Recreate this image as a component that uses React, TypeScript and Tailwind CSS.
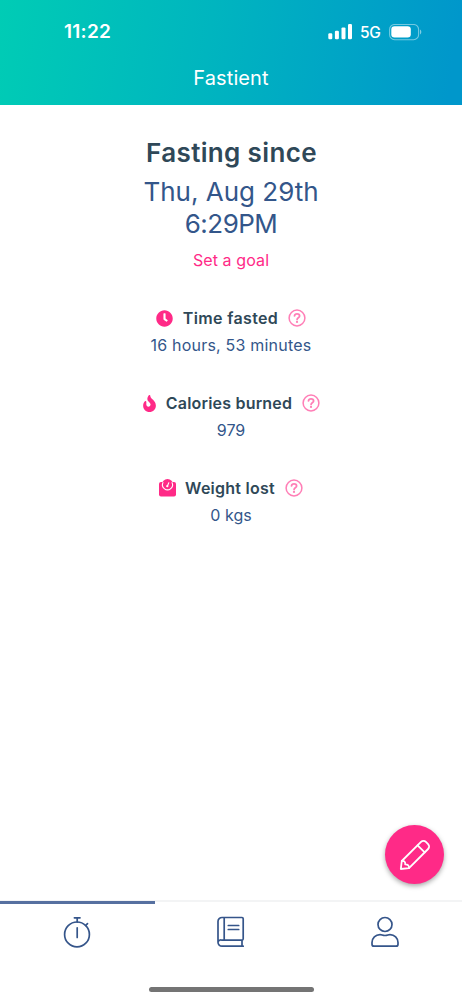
import type { ReactNode } from "react";
import { FaClock, FaFire } from "react-icons/fa";

function StatusBar() {
  return (
    <div className="flex h-[64px] items-center pl-[64px] pr-[40px] text-white">
      <span className="text-[19px] font-semibold leading-6 tracking-[0.25px]">11:22</span>
      <svg className="ml-auto" width="25" height="16" viewBox="0 0 25 16" fill="white">
        <rect x="0.3" y="9.2" width="4" height="6" rx="1.2" />
        <rect x="6.9" y="6.7" width="4" height="8.5" rx="1.2" />
        <rect x="13.5" y="3.4" width="4" height="11.8" rx="1.2" />
        <rect x="20" y="0.1" width="4" height="15.1" rx="1.2" />
      </svg>
      <span className="ml-[7px] mt-[2px] w-[21px] text-[15.5px] font-medium leading-5 tracking-[-0.4px]">5G</span>
      <svg className="ml-[8px]" width="33" height="17" viewBox="0 0 33 17" fill="none">
        <rect x="0.6" y="0.5" width="29" height="15.2" rx="5" stroke="white" strokeOpacity="0.45" strokeWidth="1.1" />
        <rect x="2.3" y="2.3" width="19.5" height="11.2" rx="3.2" fill="white" />
        <path d="M31 5.6v5c1.8-.8 1.8-4.2 0-5Z" fill="white" fillOpacity="0.5" />
      </svg>
    </div>
  );
}

function HelpIcon() {
  return (
    <svg
      className="ml-[10px] size-[18px] text-[#ff2a87] opacity-60"
      viewBox="0 0 18 18"
      fill="none"
      stroke="currentColor"
      strokeWidth="1.5"
      strokeLinecap="round"
    >
      <circle cx="9" cy="9" r="7.9" />
      <path d="M6.5 6.9c.2-1.3 1.2-2 2.5-2 1.5 0 2.6.9 2.6 2.1 0 1.7-2.5 1.8-2.5 3.4" strokeWidth="1.8" />
      <circle cx="9" cy="12.9" r="1.1" fill="currentColor" stroke="none" />
    </svg>
  );
}

function ScaleIcon() {
  return (
    <svg className="mr-[9px] h-[18px] w-[17px] text-[#ff2a87]" viewBox="0 0 17 18" fill="none">
      <path d="M2 3h13a2 2 0 0 1 2 2v10.600a2 2 0 0 1-2 2H2a2 2 0 0 1-2-2V5a2 2 0 0 1 2-2Z" fill="currentColor" />
      <circle cx="8.500" cy="5.800" r="5.700" fill="currentColor" />
      <path d="M4.200 3.200a5 5 0 1 0 8.600 0" stroke="white" strokeWidth="1.100" />
      <path d="M8.300 7.200l1.500-3.500" stroke="white" strokeWidth="1.100" strokeLinecap="round" />
      <circle cx="8.300" cy="7.200" r="1.100" fill="white" />
    </svg>
  );
}

type StatProps = { icon: ReactNode; label: ReactNode; value: ReactNode };

function Stat({ icon, label, value }: StatProps) {
  return (
    <section className="flex h-[85px] flex-col items-center">
      <h2 className="flex h-[28px] items-center text-[#2f4858]">
        {icon}
        {label}
        <HelpIcon />
      </h2>
      {value}
    </section>
  );
}

export default function App() {
  return (
    <div className="flex h-[1000px] w-[462px] flex-col bg-white font-['Inter',sans-serif]">
      <header className="h-[105px] bg-linear-[98deg,#00ccb5_0%,#00b5bf_45%,#0097cb_97%]">
        <StatusBar />
        <h1 className="text-center text-[20px] leading-[28px] text-white">
          <span className="tracking-[0.1px]">Fastient</span>
        </h1>
      </header>

      <main className="relative flex flex-1 flex-col items-center pt-[30px]">
        <h2 className="pl-px text-[26px] font-semibold leading-[35px] tracking-[0.35px] text-[#2f4858]">Fasting since</h2>
        <div className="mt-[6px] flex flex-col items-center text-[26px] leading-[32px] text-[#33568a]">
          <span>Thu, Aug 29th</span>
          <span className="tracking-[-0.5px]">6:29PM</span>
        </div>
        <a className="mt-[8px] text-[16px] leading-[24px] tracking-[0.1px] text-[#ff2a87]">Set a goal</a>

        <div className="mt-[32px]">
          <Stat
            icon={<FaClock className="mr-[10px] size-[17px] text-[#ff2a87]" />}
            label={<span className="text-[16px] font-semibold tracking-[0.35px]">Time fasted</span>}
            value={<p className="text-[16px] leading-[27px] tracking-[0.2px] text-[#33568a]">16 hours, 53 minutes</p>}
          />
          <Stat
            icon={<FaFire className="mr-[9px] h-[17px] w-[15px] text-[#ff2a87]" />}
            label={<span className="text-[16px] font-semibold tracking-[0.2px]">Calories burned</span>}
            value={<p className="text-[16px] leading-[27px] text-[#33568a]">979</p>}
          />
          <Stat
            icon={<ScaleIcon />}
            label={<span className="text-[16px] font-semibold tracking-[0.25px]">Weight lost</span>}
            value={<p className="text-[16px] leading-[27px] text-[#33568a]">0 kgs</p>}
          />
        </div>

        <button
          aria-label="Edit"
          className="absolute bottom-[16px] right-[18px] flex size-[59px] items-center justify-center rounded-full bg-[#ff2a87] shadow-[0_2px_5px_rgba(0,0,0,0.35)]"
        >
          <svg width="32" height="32" viewBox="0 0 32 32" fill="none" stroke="white" strokeWidth="1.8" strokeLinejoin="round" strokeLinecap="round">
            <path d="M1.800 30l1-8L22 2.900a3.500 3.500 0 0 1 4.900 0l2.200 2.200a3.500 3.500 0 0 1 0 4.900L10 29.100Z" />
            <path d="M18.600 6.300l7.100 7.100M2.800 22c2.400-.3 3.700.7 3.400 3.400 2.900 0 4 1.200 3.800 3.700" />
          </svg>
        </button>
      </main>

      <nav className="h-[100px]">
        <div className="flex h-[4px] items-start border-t-2 border-[#f3f4f5]">
          <div className="-mt-px h-[3px] w-[154.500px] bg-[#5670a0]" />
        </div>
        <div className="grid h-[56px] grid-cols-3 place-items-center text-[#35558a]">
          <svg width="30" height="32" viewBox="0 0 30 32" fill="none" stroke="currentColor" strokeWidth="1.7" strokeLinecap="round">
            <circle cx="15" cy="18.4" r="12.4" />
            <path d="M12.4 1.8h5.6M15.2 1.8v4.3M23.7 9.5l1.8-1.9M15.2 11.8v9.7" />
          </svg>
          <svg width="28" height="32" viewBox="0 0 28 32" fill="none" stroke="currentColor" strokeWidth="1.7" strokeLinecap="round" strokeLinejoin="round">
            <path d="M26.2 30.2H5a4 4 0 0 1-4-4V5.5a4 4 0 0 1 4-4h20a1.2 1.2 0 0 1 1.2 1.2v20a1.5 1.5 0 0 1-1.2 1.500H5a3 3 0 0 0-4 2M7.2 1.5v22.7M25 24.2v6M11.3 9.5h10.4M11.3 13.5h10.4" />
          </svg>
          <svg width="28" height="32" viewBox="0 0 28 32" fill="none" stroke="currentColor" strokeWidth="1.7" strokeLinejoin="round">
            <circle cx="14" cy="8.5" r="7" />
            <path d="M9 18.6c2 0 2.400.9 5 .9s3-.9 5-.9a8 8 0 0 1 8 8v1.600a2 2 0 0 1-2 2H3a2 2 0 0 1-2-2v-1.600a8 8 0 0 1 8-8Z" />
          </svg>
        </div>
        <div className="mx-auto mt-[26.5px] h-[5px] w-[165px] rounded-full bg-[#747474]" />
      </nav>
    </div>
  );
}
